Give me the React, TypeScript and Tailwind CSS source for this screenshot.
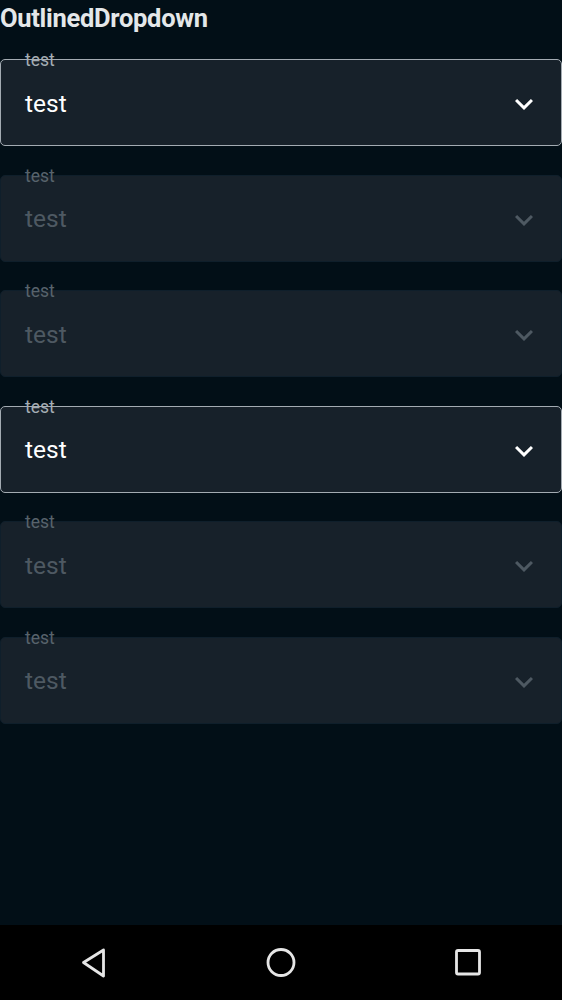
import React from "react";

type FieldProps = { label: string; value: string; enabled?: boolean };

function Chevron({ color }: { color: string }) {
  return (
    <svg width="36" height="36" viewBox="0 0 24 24" className="shrink-0">
      <path d="M16.59 8.59L12 13.17 7.41 8.59 6 10l6 6 6-6z" fill={color} />
    </svg>
  );
}

function OutlinedDropdown({ label, value, enabled }: FieldProps) {
  return (
    <div
      className={
        "relative h-[87px] w-[562px] rounded-[5px] border flex items-center bg-[#17212a] pl-[24px] pr-[19px] pt-[3px] " +
        (enabled ? "border-[#a3abb2]" : "border-[#0f1f2b]")
      }
    >
      <span
        className={
          "absolute left-[24px] top-[-10px] text-[17.5px] leading-[20px] " +
          (enabled ? "text-[#a5adb4]" : "text-[#58636c]")
        }
      >
        {label}
      </span>
      <span
        className={
          "flex-1 text-[24.5px] leading-none " +
          (enabled ? "text-white" : "text-[#4e5962]")
        }
      >
        {value}
      </span>
      <Chevron color={enabled ? "#ffffff" : "#4e5962"} />
    </div>
  );
}

export default function App() {
  const fields = [true, false, false, true, false, false];

  return (
    <div
      className="w-[562px] h-[1000px] flex flex-col bg-[#020f17] overflow-hidden"
      style={{ fontFamily: "Roboto, 'Liberation Sans', sans-serif" }}
    >
      <div className="flex-1 flex flex-col">
        <h1 className="text-[25.5px] leading-[36px] font-bold text-[#e4e7e9] tracking-[-0.3px]">
          OutlinedDropdown
        </h1>
        <div className="mt-[23px] flex flex-col gap-[28.5px]">
          {fields.map((en, i) => (
            <OutlinedDropdown key={i} label="test" value="test" enabled={en} />
          ))}
        </div>
      </div>

      <nav className="h-[75px] bg-black">
        <svg width="562" height="75" viewBox="0 0 562 75" className="block">
          <path
            d="M103.5 25 L83.5 37.5 L103.5 51 Z"
            fill="none"
            stroke="#e6e6e6"
            strokeWidth="2.8"
            strokeLinejoin="round"
          />
          <circle cx="281" cy="37.5" r="13" fill="none" stroke="#e6e6e6" strokeWidth="2.8" />
          <rect
            x="456.5"
            y="25.5"
            width="23"
            height="23.5"
            rx="1.5"
            fill="none"
            stroke="#e6e6e6"
            strokeWidth="2.8"
          />
        </svg>
      </nav>
    </div>
  );
}
